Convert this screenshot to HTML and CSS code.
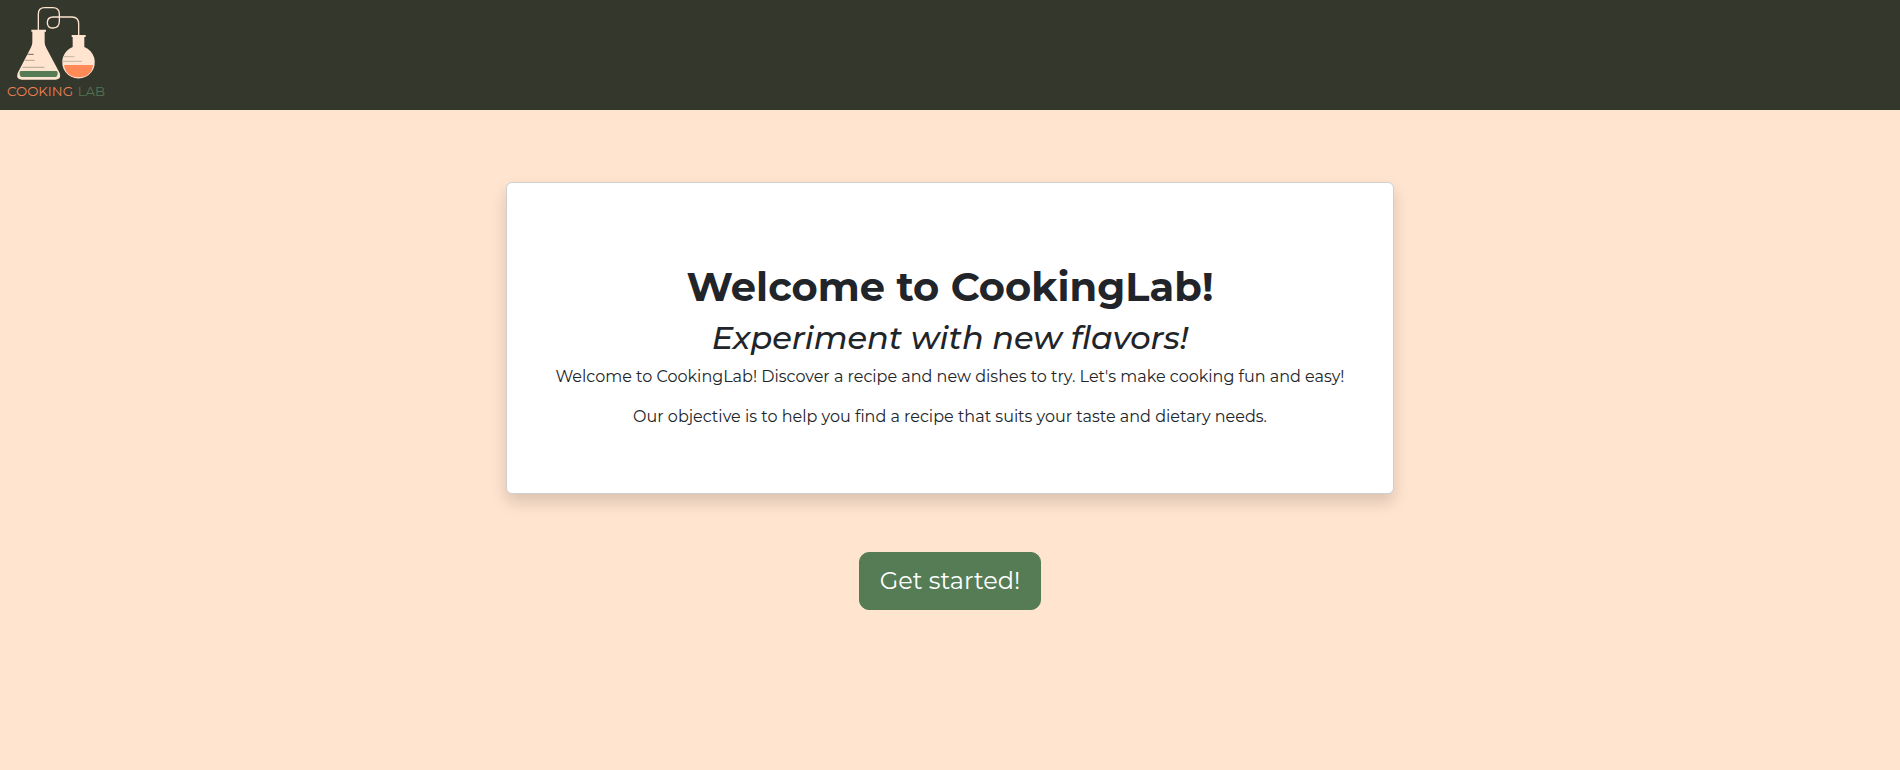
FILE: index.html
```html
<!DOCTYPE html>
<html lang="en">
<head>
<meta charset="utf-8">
<meta name="viewport" content="width=device-width, initial-scale=1">
<title>CookingLab</title>
<link rel="stylesheet" href="styles.css">
</head>
<body>
<header class="navbar">
  <a class="brand" href="#" aria-label="Cooking Lab">
    <svg class="logo" viewBox="0 0 360 330">
      <g fill="none" stroke="#ffe4cf" stroke-width="4">
        <path d="M115 92V42Q115 23 134 23H158Q178 23 178 42V64Q178 84 159 84Q142 84 142 68Q142 51 160 51H216Q236 51 236 72V106"/>
      </g>
      <g fill="#ffe4cf">
        <path d="M94 89H138V95H134V127Q134 136 139 144L179 219Q185 238 167 239H65Q47 238 53 219L92 144Q97 136 97 127V95H94Z"/>
        <path d="M215 105H257V111H253V141A49 49 0 1 1 218 141V111H215Z"/>
      </g>
      <path fill="#557c55" d="M62 213H169Q173 213 173 218V221Q173 231 163 231H69Q59 231 59 221V218Q59 213 62 213Z"/>
      <path fill="#ff8a58" d="M192 195H279Q275 231 236 232Q197 231 192 195Z"/>
      <g fill="none" stroke-width="3">
        <path stroke="#6f6a5d" d="M82 163H101"/>
        <path stroke="#b5a696" d="M74 181H104M67 202H133"/>
        <path stroke="#c5b5a4" d="M190 170H223M188 184H246"/>
      </g>
      <text class="logo-text" x="21" y="289" fill="#ec8055">COOKING</text>
      <text class="logo-text" x="233" y="289" fill="#507550">LAB</text>
    </svg>
  </a>
</header>
<main class="page">
  <section class="card">
    <h1 class="title">Welcome to CookingLab!</h1>
    <h2 class="subtitle">Experiment with new flavors!</h2>
    <p class="text">Welcome to CookingLab! Discover a recipe and new dishes to try. Let's make cooking fun and easy!</p>
    <p class="text">Our objective is to help you find a recipe that suits your taste and dietary needs.</p>
  </section>
  <button class="start" type="button">Get started!</button>
</main>
</body>
</html>
```

FILE: styles.css
```css
* {
  box-sizing: border-box;
}

body {
  margin: 0;
  min-height: 100vh;
  background: #ffe4cf;
  color: #212529;
  font-family: Montserrat, Inter, "Open Sans", sans-serif;
}

.navbar {
  display: flex;
  background: #34372c;
}

.brand,
.logo {
  display: block;
}

.logo {
  width: 120px;
  height: 110px;
}

.logo-text {
  font-size: 40px;
}

.page {
  display: flex;
  flex-direction: column;
  align-items: center;
  padding: 72px 16px;
}

.card {
  width: 100%;
  max-width: 888px;
  padding: 80px 32px 48px;
  border: 1px solid #ced0d2;
  border-radius: 6px;
  background: #fff;
  box-shadow: 0 8px 16px rgba(0, 0, 0, 0.15);
  text-align: center;
}

.title,
.subtitle {
  margin: 0 0 8px;
}

.title {
  font-size: 40px;
  font-weight: 700;
  line-height: 48px;
}

.subtitle {
  font-size: 32px;
  font-style: italic;
  font-weight: 500;
  line-height: 38px;
}

.text {
  margin: 0 0 16px;
  font-size: 16px;
  line-height: 24px;
}

.start {
  margin-top: 58px;
  padding: 10px 20px;
  border: 1px solid #557c55;
  border-radius: 10px;
  background: #557c55;
  color: #fff;
  font-family: inherit;
  font-size: 24px;
  line-height: 36px;
  cursor: pointer;
}
```
